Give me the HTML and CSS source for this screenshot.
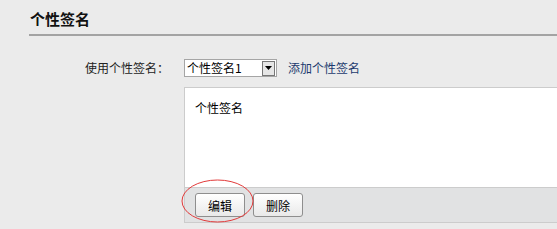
FILE: index.html
```html
<!DOCTYPE html>
<html lang="zh-CN">
<head>
  <meta charset="UTF-8">
  <title>个性签名</title>
  <link rel="stylesheet" href="styles.css">
</head>
<body>
  <div class="page">
    <h2 class="title">个性签名</h2>

    <div class="row">
      <label class="label">使用个性签名：</label>
      <div class="field">
        <div class="select">
          <span class="select-text">个性签名1</span>
          <span class="select-arrow">
            <svg width="7" height="4" viewBox="0 0 7 4"><path d="M0 0h7L3.5 4z" fill="#000"/></svg>
          </span>
        </div>
        <a class="add-link" href="#">添加个性签名</a>
      </div>
    </div>

    <div class="row row-box">
      <div class="label"></div>
      <div class="sig-box">
        <div class="sig-text">个性签名</div>
        <div class="sig-actions">
          <span class="mark">
            <button class="btn">编辑</button>
            <svg class="mark-ring" width="73" height="44" viewBox="0 0 73 44">
              <ellipse cx="36.5" cy="22" rx="35.5" ry="21" fill="none" stroke="#e23a3a" stroke-width="1"/>
            </svg>
          </span>
          <button class="btn">删除</button>
        </div>
      </div>
    </div>
  </div>
</body>
</html>
```

FILE: styles.css
```css
html, body {
  margin: 0;
  overflow: hidden;
}
body {
  background-color: #ebebeb;
  font-family: "Noto Sans CJK SC", "Liberation Sans", sans-serif;
  font-size: 12px;
  color: #222;
}
.page {
  padding-left: 29px;
}
.title {
  margin: 0;
  padding: 9px 0 5px 1px;
  font-size: 15px;
  line-height: 20px;
  font-weight: bold;
  color: #111;
  border-bottom: 2px solid #a3a3a3;
}
.row {
  display: flex;
  margin-top: 23px;
}
.row-box {
  margin-top: 10px;
}
.label {
  width: 140px;
  flex: none;
  text-align: right;
  padding-right: 15px;
  line-height: 18px;
}
.field {
  display: flex;
  align-items: center;
  gap: 11px;
}
.select {
  display: flex;
  align-items: center;
  justify-content: space-between;
  width: 89px;
  height: 16px;
  border: 1px solid #a5a5a5;
  background-color: #fff;
  padding-left: 2px;
}
.select-text {
  line-height: 16px;
  color: #000;
}
.select-arrow {
  display: flex;
  align-items: center;
  justify-content: center;
  width: 11px;
  height: 13px;
  margin-right: 1px;
  border: 1px solid #777;
  background-color: #e6e6e6;
}
.add-link {
  color: #1c3a6e;
  text-decoration: none;
  line-height: 18px;
}
.sig-box {
  flex: 1;
  border: 1px solid #cccccc;
  border-right: none;
  background-color: #e1e2e3;
}
.sig-text {
  height: 100px;
  background-color: #fff;
  border-bottom: 1px solid #cccccc;
  padding: 12px 0 0 10px;
  box-sizing: border-box;
  line-height: 16px;
  color: #000;
}
.sig-actions {
  display: flex;
  gap: 8px;
  padding: 5px 0 5px 10px;
}
.mark {
  position: relative;
  display: flex;
}
.mark-ring {
  position: absolute;
  left: -14px;
  top: -14px;
  pointer-events: none;
}
.btn {
  width: 50px;
  height: 24px;
  padding: 0;
  border: 1px solid #8e8e8e;
  border-radius: 3px;
  background: linear-gradient(#ffffff, #e9e9e9);
  font-family: "Noto Sans CJK SC", "Liberation Sans", sans-serif;
  font-size: 12px;
  color: #000;
}
```
